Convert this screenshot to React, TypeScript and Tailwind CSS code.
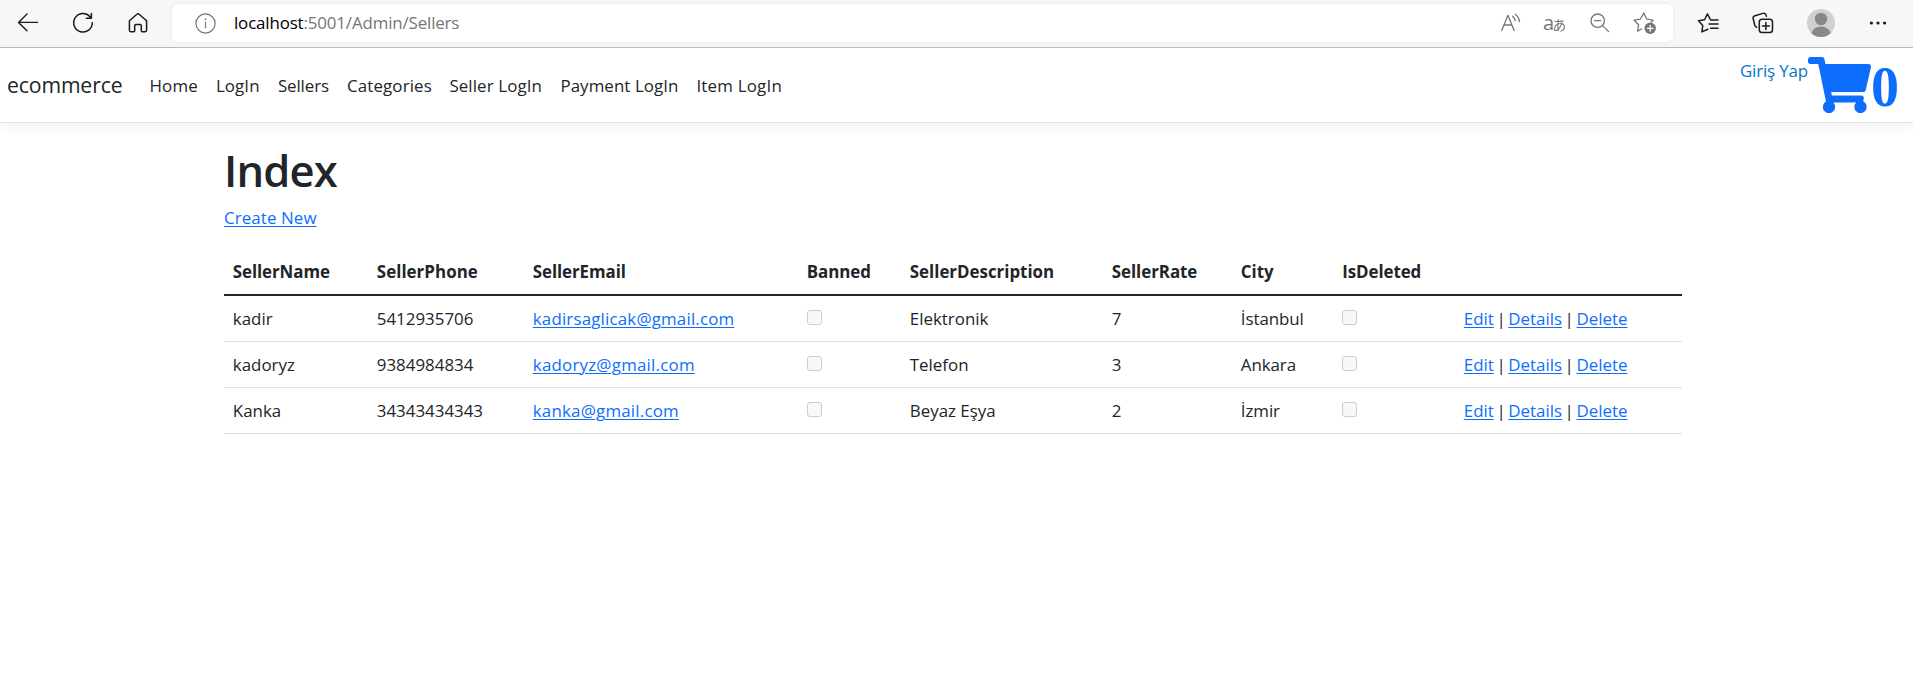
import type { ReactNode } from "react";

type Seller = {
  name: string;
  phone: string;
  email: string;
  emailTracking: string;
  description: string;
  rate: number;
  city: string;
};

const sellers: Seller[] = [
  { name: "kadir", phone: "5412935706", email: "kadirsaglicak@gmail.com", emailTracking: "tracking-[0.18px]", description: "Elektronik", rate: 7, city: "İstanbul" },
  { name: "kadoryz", phone: "9384984834", email: "kadoryz@gmail.com", emailTracking: "tracking-[0.22px]", description: "Telefon", rate: 3, city: "Ankara" },
  { name: "Kanka", phone: "34343434343", email: "kanka@gmail.com", emailTracking: "tracking-[0.2px]", description: "Beyaz Eşya", rate: 2, city: "İzmir" },
];

const navItems = [
  { label: "Home", className: "w-[66.5px] tracking-[0.2px]" },
  { label: "LogIn", className: "w-[62px] tracking-[0.1px]" },
  { label: "Sellers", className: "w-[69px] tracking-[-0.1px]" },
  { label: "Categories", className: "w-[102.5px] tracking-[0.15px]" },
  { label: "Seller LogIn", className: "w-[111px] tracking-[0.11px]" },
  { label: "Payment LogIn", className: "w-[136px] tracking-[0.08px]" },
  { label: "Item LogIn", className: "w-[104px] tracking-[0.21px]" },
];

const columns = [
  { label: "SellerName", className: "w-36 tracking-[-0.07px]" },
  { label: "SellerPhone", className: "w-39 tracking-[0.05px]" },
  { label: "SellerEmail", className: "w-[274px] tracking-[-0.07px]" },
  { label: "Banned", className: "w-[103px] tracking-[-0.06px]" },
  { label: "SellerDescription", className: "w-[202px]" },
  { label: "SellerRate", className: "w-[129px] tracking-[-0.04px]" },
  { label: "City", className: "w-[101.4px]" },
  { label: "IsDeleted", className: "w-[121.6px] tracking-[-0.06px]" },
  { label: "", className: "w-[227px]" },
];

function Link({ children, className = "" }: { children: ReactNode; className?: string }) {
  return (
    <a href="#" className={`text-[#0d6efd] underline decoration-1 underline-offset-[1.5px] ${className}`}>
      {children}
    </a>
  );
}

function DisabledCheckbox() {
  return <span className="-mt-0.5 block size-[15px] rounded-[3px] border border-[#cdcdcd] bg-[#f8f8f8]" />;
}

function BrowserBar() {
  return (
    <header className="flex h-12 items-start border-b border-[#bdbdbd] bg-[#f7f7f7] text-[#1b1b1b]">
      <div className="flex h-[46px] w-[172px] shrink-0 items-center pl-[17px]">
        <svg className="h-5 w-[22px]" viewBox="0 0 22 20" fill="none" stroke="currentColor" strokeWidth="1.4" strokeLinecap="round" strokeLinejoin="round">
          <path d="M10 1 1.5 9.4 10 17.8M1.7 9.4H20.5" />
        </svg>
        <svg className="ml-[33px] size-[22px]" viewBox="0 0 22 22" fill="none" stroke="currentColor" strokeWidth="1.5" strokeLinecap="round" strokeLinejoin="round">
          <path d="M20.3 10.7A9.3 9.3 0 1 1 17.8 4.4L19.3 6M19.4 1.4V6.2H14.4" />
        </svg>
        <svg className="ml-[34px] size-[20px]" viewBox="0 0 20 20" fill="none" stroke="currentColor" strokeWidth="1.5" strokeLinejoin="round">
          <path d="M8.9 1.3 2 7.2a1.6 1.6 0 0 0-.6 1.2v8.9c0 .8.6 1.4 1.4 1.4h2.9c.6 0 1-.4 1-1v-5.1c0-.7.4-1.1 1.1-1.1h4.4c.7 0 1.1.4 1.1 1.1v5.1c0 .6.4 1 1 1h2.9c.8 0 1.4-.6 1.4-1.4V8.4c0-.5-.2-.9-.6-1.2l-6.9-5.9a1.6 1.6 0 0 0-2.2 0Z" />
        </svg>
      </div>

      <div className="mt-1 flex h-[38px] w-[1501px] shrink-0 items-center rounded-md bg-white text-[#767676] shadow-[0_0_4px_rgba(0,0,0,0.06)]">
        <svg className="ml-[23px] size-[21px]" viewBox="0 0 21 21" fill="none" stroke="currentColor" strokeWidth="1.2">
          <circle cx="10.5" cy="10.5" r="9.6" />
          <path d="M10.5 9v6.3" />
          <circle cx="10.5" cy="6.3" r="0.9" fill="currentColor" stroke="none" />
        </svg>
        <span className="ml-[18px] text-[16.9px] leading-7 tracking-[-0.14px]">
          <span className="text-black">localhost</span>:5001/Admin/Sellers
        </span>

        <svg className="ml-auto h-5 w-[22px]" viewBox="0 0 22 20" fill="none" stroke="currentColor" strokeWidth="1.3" strokeLinecap="round" strokeLinejoin="round">
          <path d="M1.7 17.5 7.9 2.3l6.2 15.2M3.9 12h8" />
          <path d="M12.6 3.2c1.4 1 2.3 2.5 2.5 4.4M15.2 1.3c2.3 1.5 3.9 4.1 4.3 7.2" />
        </svg>
        <span className="ml-[21px] flex w-6 items-baseline leading-5">
          <span className="-mr-0.5 text-[20px]">a</span>
          <span className="font-['Noto_Sans_CJK_JP',sans-serif] text-[14px]">あ</span>
        </span>
        <svg className="ml-[23px] size-5" viewBox="0 0 20 20" fill="none" stroke="currentColor" strokeWidth="1.3" strokeLinecap="round">
          <circle cx="7.7" cy="7.7" r="6.7" />
          <path d="M4.6 7.7h6.2M12.6 12.6l6 6" />
        </svg>
        <svg className="mr-4 ml-[23px] size-6" viewBox="0 0 24 24" fill="none" stroke="currentColor" strokeWidth="1.3" strokeLinecap="round" strokeLinejoin="round">
          <path d="m8.6 18-4 2.1 1-6.4L1.1 9.2l6.2-1L10.8 2l3 6.2 6.3 1-1.9 1.9" />
          <circle cx="17.2" cy="17.3" r="5.7" fill="currentColor" stroke="none" />
          <path d="M17.2 14.4v5.8M14.3 17.3h5.8" stroke="white" />
        </svg>
      </div>

      <div className="flex h-[46px] items-center">
        <svg className="ml-6 size-[22px]" viewBox="0 0 22 22" fill="none" stroke="currentColor" strokeWidth="1.5" strokeLinecap="round" strokeLinejoin="round">
          <path d="M10.8 17.2 4.9 19.9 5.8 13.5 1.4 8.8l6.2-1L10.4 1.9l2.8 5.3M13.6 8H21M12 12.1h9M13.6 16.2H21" />
        </svg>
        <svg className="ml-[33px] size-[22px]" viewBox="0 0 22 22" fill="none" stroke="currentColor" strokeWidth="1.5" strokeLinecap="round" strokeLinejoin="round">
          <path d="M4.6 15.2c-1-.4-1.5-1-1.8-2L1.2 6.8c-.4-1.5.3-2.7 1.8-3.1l8-2.3c1.5-.4 2.7.3 3.1 1.8l.3 1" />
          <rect x="7.3" y="7.3" width="13.2" height="13.2" rx="2.8" />
          <path d="M13.9 10.4v7M10.4 13.9h7" />
        </svg>
        <svg className="ml-[33px] size-7" viewBox="0 0 28 28">
          <circle cx="14" cy="14" r="14" fill="#d2d0ce" />
          <circle cx="14" cy="10" r="6.2" fill="#8a8886" />
          <path d="M4.2 24a10.6 10.6 0 0 1 19.6 0 14 14 0 0 1-19.6 0Z" fill="#8a8886" />
        </svg>
        <svg className="ml-[34px] h-1 w-[18px]" viewBox="0 0 18 4" fill="currentColor">
          <circle cx="2.4" cy="2" r="1.6" />
          <circle cx="9" cy="2" r="1.6" />
          <circle cx="15.6" cy="2" r="1.6" />
        </svg>
      </div>
    </header>
  );
}

function Navbar() {
  return (
    <nav className="flex h-[75px] items-center border-b border-[#dee2e6] bg-white pl-[7px] shadow-[0_4px_13px_rgba(0,0,0,0.05)]">
      <a href="#" className="w-[142.4px] text-[21.2px] leading-8 tracking-[-0.13px]">ecommerce</a>
      <ul className="flex pt-px">
        {navItems.map((item) => (
          <li key={item.label} className={`leading-7 whitespace-nowrap ${item.className}`}>
            <a href="#">{item.label}</a>
          </li>
        ))}
      </ul>
      <div className="mr-[14px] ml-auto flex h-full items-start text-[#0d6efd]">
        <a href="#" className="mt-[9px] leading-7 tracking-[-0.14px] text-[#0077cc]">Giriş Yap</a>
        <a href="#" className="mt-[9px] flex h-14 items-center">
          <svg className="h-14 w-[63px]" viewBox="0 0 576 512" fill="currentColor">
            <path d="M528.12 301.319l47.273-208C578.806 78.301 567.391 64 551.99 64H159.208l-9.166-44.81C147.758 8.021 137.93 0 126.529 0H24C10.745 0 0 10.745 0 24v16c0 13.255 10.745 24 24 24h69.883l70.248 343.435C147.325 417.1 136 435.222 136 456c0 30.928 25.072 56 56 56s56-25.072 56-56c0-15.674-6.447-29.835-16.824-40h209.647C430.447 426.165 424 440.326 424 456c0 30.928 25.072 56 56 56s56-25.072 56-56c0-22.172-12.888-41.332-31.579-50.405l5.517-24.276c3.413-15.018-8.002-29.319-23.403-29.319H218.117l-6.545-32h293.145c11.206 0 20.92-7.754 23.403-18.681z" />
          </svg>
          <span className="pt-1 font-['Liberation_Serif',serif] text-[56px] leading-[56px] font-bold">0</span>
        </a>
      </div>
    </nav>
  );
}

function SellersTable() {
  return (
    <table className="mt-[18px] w-[1458px] table-fixed border-separate border-spacing-0 text-left">
      <thead>
        <tr className="h-[47px]">
          {columns.map((column) => (
            <th key={column.label} className={`border-b-2 border-[#212529] px-[8.8px] py-0 font-bold ${column.className}`}>
              {column.label}
            </th>
          ))}
        </tr>
      </thead>
      <tbody className="[&_td]:border-b [&_td]:border-[#dee2e6] [&_td]:px-[8.8px] [&_td]:py-0">
        {sellers.map((seller) => (
          <tr key={seller.name} className="h-[46px]">
            <td>{seller.name}</td>
            <td>{seller.phone}</td>
            <td>
              <Link className={seller.emailTracking}>{seller.email}</Link>
            </td>
            <td><DisabledCheckbox /></td>
            <td>{seller.description}</td>
            <td>{seller.rate}</td>
            <td className="tracking-[-0.06px]">{seller.city}</td>
            <td><DisabledCheckbox /></td>
            <td className="[word-spacing:-1px] whitespace-nowrap">
              <Link>Edit</Link> <span className="-mx-[0.8px]">|</span> <Link>Details</Link> <span className="-mx-[0.8px]">|</span> <Link>Delete</Link>
            </td>
          </tr>
        ))}
      </tbody>
    </table>
  );
}

export default function App() {
  return (
    <div className="min-h-[691px] bg-white font-['Open_Sans',sans-serif] text-[16.9px] leading-[27px] text-[#212529]">
      <BrowserBar />
      <Navbar />
      <main className="ml-56 w-[1458px] pt-[22px]">
        <h1 className="mb-[7px] text-[43.5px] leading-[52px] font-semibold tracking-[-0.8px]">Index</h1>
        <p>
          <Link className="tracking-[0.1px]">Create New</Link>
        </p>
        <SellersTable />
      </main>
    </div>
  );
}
